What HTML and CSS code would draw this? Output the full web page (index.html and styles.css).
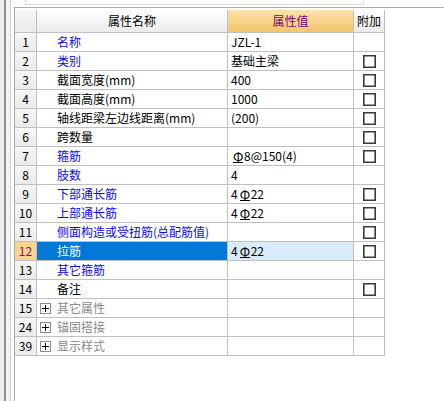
FILE: index.html
```html
<!DOCTYPE html>
<html lang="zh">
<head>
<meta charset="utf-8">
<title>属性编辑</title>
<link rel="stylesheet" href="styles.css">
</head>
<body>
<div class="gutter"></div>
<div class="main">
  <div class="strip"><div class="ghost"></div></div>
  <div class="panel">
    <div class="grid">
      <div class="c num hd"></div>
      <div class="c hd name-h">属性名称</div>
      <div class="c hd val-h">属性值</div>
      <div class="c hd add-h">附加</div>

      <div class="c num">1</div><div class="c name blue">名称</div><div class="c val">JZL-1</div><div class="c add"></div>
      <div class="c num">2</div><div class="c name blue">类别</div><div class="c val">基础主梁</div><div class="c add"><span class="cb"></span></div>
      <div class="c num">3</div><div class="c name">截面宽度(mm)</div><div class="c val">400</div><div class="c add"><span class="cb"></span></div>
      <div class="c num">4</div><div class="c name">截面高度(mm)</div><div class="c val">1000</div><div class="c add"><span class="cb"></span></div>
      <div class="c num">5</div><div class="c name">轴线距梁左边线距离(mm)</div><div class="c val">(200)</div><div class="c add"><span class="cb"></span></div>
      <div class="c num">6</div><div class="c name">跨数量</div><div class="c val"></div><div class="c add"><span class="cb"></span></div>
      <div class="c num">7</div><div class="c name blue">箍筋</div><div class="c val"><span class="rb">Φ</span>8@150(4)</div><div class="c add"><span class="cb"></span></div>
      <div class="c num">8</div><div class="c name blue">肢数</div><div class="c val">4</div><div class="c add"></div>
      <div class="c num">9</div><div class="c name blue">下部通长筋</div><div class="c val">4<span class="rb">Φ</span>22</div><div class="c add"><span class="cb"></span></div>
      <div class="c num">10</div><div class="c name blue">上部通长筋</div><div class="c val">4<span class="rb">Φ</span>22</div><div class="c add"><span class="cb"></span></div>
      <div class="c num">11</div><div class="c name blue">侧面构造或受扭筋(总配筋值)</div><div class="c val"></div><div class="c add"><span class="cb"></span></div>
      <div class="c num sel-num">12</div><div class="c name sel-name">拉筋</div><div class="c val sel-val">4<span class="rb">Φ</span>22</div><div class="c add"><span class="cb"></span></div>
      <div class="c num">13</div><div class="c name blue">其它箍筋</div><div class="c val"></div><div class="c add"></div>
      <div class="c num">14</div><div class="c name">备注</div><div class="c val"></div><div class="c add"><span class="cb"></span></div>
      <div class="c num">15</div><div class="c name grp"><span class="plus"></span>其它属性</div><div class="c val"></div><div class="c add"></div>
      <div class="c num">24</div><div class="c name grp"><span class="plus"></span>锚固搭接</div><div class="c val"></div><div class="c add"></div>
      <div class="c num">39</div><div class="c name grp"><span class="plus"></span>显示样式</div><div class="c val"></div><div class="c add"></div>
    </div>
  </div>
</div>
</body>
</html>
```

FILE: styles.css
```css
html, body {
  margin: 0;
  padding: 0;
  background: #ffffff;
}
body {
  display: flex;
  width: 444px;
  height: 401px;
  overflow: hidden;
  font-family: "Noto Sans CJK SC", "Liberation Sans", sans-serif;
  font-size: 12px;
  color: #000;
}
.gutter {
  width: 14px;
  flex: none;
  background: linear-gradient(to right,
    #ececec 0, #ececec 4px,
    #8f8f8f 4px, #8f8f8f 6px,
    #f2f2f2 6px, #f2f2f2 10px,
    #cfcfcf 10px, #cfcfcf 11px,
    #ffffff 11px, #ffffff 14px);
}
.main {
  flex: 1;
  display: flex;
  flex-direction: column;
}
.strip {
  height: 7px;
  flex: none;
}
.ghost {
  margin-left: 11px;
  width: 337px;
  height: 4px;
  border: 1px solid #dadada;
  border-top: none;
}
.panel {
  flex: 1;
  border-top: 1px solid #ababab;
  border-left: 1px solid #a9a9a9;
  padding-top: 2px;
}
.grid {
  display: grid;
  grid-template-columns: 22px 191px 126px 31px;
  grid-template-rows: 23px;
  grid-auto-rows: 19px;
  width: 370px;
}
.c {
  box-sizing: border-box;
  border-right: 1px solid #c0c0c0;
  border-bottom: 1px solid #c0c0c0;
  line-height: 18px;
  white-space: nowrap;
  overflow: hidden;
}
.hd {
  line-height: 22px;
  text-align: center;
  background: linear-gradient(#ffffff, #ebebeb);
}
.name-h { color: #000; }
.val-h {
  background: linear-gradient(#fde3a9, #f3c46c);
  color: #7d007d;
}
.add-h { color: #000; }
.num {
  text-align: center;
  background: linear-gradient(#f7f7f7, #eaeaea);
}
.name {
  padding-left: 20px;
}
.val {
  padding-left: 3px;
}
.add {
  display: flex;
  align-items: center;
  justify-content: center;
}
.blue { color: #0a0af0; }
.grp {
  color: #8a8a8a;
  padding-left: 3px;
  display: flex;
  align-items: center;
}
.plus {
  position: relative;
  width: 9px;
  height: 9px;
  border: 1px solid #8c8c8c;
  margin-right: 6px;
  flex: none;
}
.plus::before,
.plus::after {
  content: "";
  position: absolute;
  background: #000;
}
.plus::before {
  left: 1px;
  top: 4px;
  width: 7px;
  height: 1px;
}
.plus::after {
  left: 4px;
  top: 1px;
  width: 1px;
  height: 7px;
}
.cb {
  width: 11px;
  height: 11px;
  border: 1px solid #3a3a3a;
  background: #fff;
  box-shadow: inset 0 0 0 0.6px #3a3a3a;
}
.rb {
  display: inline-block;
  width: 10px;
  height: 11px;
  line-height: 11px;
  font-size: 13px;
  text-align: center;
  border-bottom: 1px solid #000;
  margin: 0 1px 0 2px;
  vertical-align: -1px;
}
.sel-num {
  background: #f9d390;
  color: #8a1060;
}
.sel-name {
  background: #0078d7;
  color: #ffffff;
}
.sel-val {
  background: #d9eaf8;
}
```
